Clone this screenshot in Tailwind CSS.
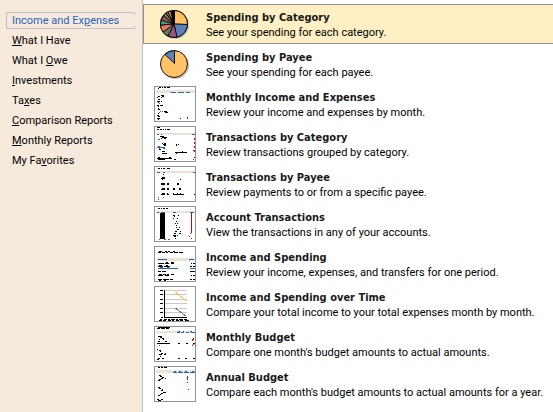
<!DOCTYPE html>
<html lang="en">
<head>
<meta charset="utf-8">
<meta name="viewport" content="width=device-width, initial-scale=1">
<title>Reports</title>
<script src="https://cdn.jsdelivr.net/npm/@tailwindcss/browser@4"></script>
</head>
<body class="flex min-h-screen bg-white font-['Tahoma','Roboto','DejaVu_Sans_Condensed',sans-serif] text-[11px] leading-[15px] text-black">
<nav aria-label="Report groups" class="w-[143px] shrink-0 border-r border-[#c2c2ca] bg-[#f6eadd] pt-[10px]">
  <ul class="leading-5 whitespace-nowrap">
    <li class="relative pl-[6px] pr-2">
      <a href="#income" aria-current="page" class="my-[2px] block h-[17px] border border-r-0 border-[#bfc0c8] pl-[5px] leading-[15px] text-[#2a62bc]">Income and Ex<u>p</u>enses</a>
      <span class="absolute top-0 right-[7px] h-[3px] w-px bg-[#bfc0c8]"></span>
      <span class="absolute bottom-0 right-[7px] h-[3px] w-px bg-[#bfc0c8]"></span>
    </li>
    <li><a href="#have" class="block pl-3"><u>W</u>hat I Have</a></li>
    <li><a href="#owe" class="block pl-3">What I <u>O</u>we</a></li>
    <li><a href="#investments" class="block pl-3"><u>I</u>nvestments</a></li>
    <li><a href="#taxes" class="block pl-3">Ta<u>x</u>es</a></li>
    <li><a href="#comparison" class="block pl-3"><u>C</u>omparison Reports</a></li>
    <li><a href="#monthly" class="block pl-3"><u>M</u>onthly Reports</a></li>
    <li><a href="#favorites" class="block pl-3">My Fa<u>v</u>orites</a></li>
  </ul>
</nav>
<main class="min-w-0 flex-1 border-t-[3px] border-white pt-px">
  <ul class="whitespace-nowrap [&_b]:block [&_b]:font-['Tahoma','DejaVu_Sans_Condensed',sans-serif] [&_b]:text-[#191919] [&_span]:pt-[2px]">
    <li>
      <a href="#r1" class="flex h-10 items-center gap-[10px] border border-r-0 border-[#929292] bg-[#fef0c4] pl-[10px]">
        <svg class="h-9 w-[42px] shrink-0" viewBox="0 0 42 36" aria-hidden="true">
          <circle cx="21.500" cy="19.500" r="13.500" fill="#cfc6b8"/>
          <circle cx="20" cy="18" r="14" fill="#111"/>
          <g stroke="#000" stroke-width=".8">
            <path d="M20.500 18V4.500A13.500 13.500 0 0 1 33.500 18.500Z" fill="#ffc266"/>
            <path d="M20 18L33.500 18.500A13.500 13.500 0 0 1 23 31.200Z" fill="#5b82b8"/>
            <path d="M20 18L23 31.200A13.500 13.500 0 0 1 14 30Z" fill="#93557f"/>
            <path d="M20 18L14 30A13.500 13.500 0 0 1 9 26Z" fill="#677b5c"/>
            <path d="M20 18L9 26A13.500 13.500 0 0 1 6.500 19Z" fill="#ed7760"/>
            <path d="M20 18L6.500 19A13.500 13.500 0 0 1 7.500 14Z" fill="#4b9988"/>
            <path d="M20 18L7.500 14A13.500 13.500 0 0 1 9.500 10Z" fill="#cb4e60"/>
            <path d="M20 18L9.500 10A13.500 13.500 0 0 1 12 7Z" fill="#4c886c"/>
            <path d="M20 18L12 7A13.500 13.500 0 0 1 14 5.800Z" fill="#d95e55"/>
            <path d="M20 18L14 5.800A13.500 13.500 0 0 1 16.500 5Z" fill="#e89b4e"/>
          </g>
          <path d="M18 4h3v14h-3z"/>
        </svg>
        <span><b>Spending by Category</b>See your spending for each category.</span>
      </a>
    </li>
    <li>
      <a href="#r2" class="flex h-10 items-center gap-[10px] pl-[11px]">
        <svg class="h-9 w-[42px] shrink-0" viewBox="0 0 42 36" aria-hidden="true">
          <circle cx="21.500" cy="19.500" r="13.500" fill="#cfc6b8"/>
          <circle cx="20" cy="18" r="13.500" fill="#ffc266" stroke="#111"/>
          <path d="M20.500 17.500V4.500A13.500 13.500 0 0 0 11 8.500Z" fill="#5b82b8" stroke="#111"/>
        </svg>
        <span><b>Spending by Payee</b>See your spending for each payee.</span>
      </a>
    </li>
    <li>
      <a href="#r3" class="flex h-10 items-center gap-[10px] pl-[11px]">
        <svg class="h-9 w-[42px] shrink-0" viewBox="0 0 42 36" fill="none" shape-rendering="crispEdges" aria-hidden="true">
          <path d="M2 4h39v3H2z" fill="#e9e2d7"/>
          <path stroke="#000" d="M5 1.500h2m1 0h1m1 0h2m1 0h3M4 2.500h1M7 9.500h3M4 10.500h2m2 0h2M3 11.500h1m3 0h1M4 13.500h2M3 15.500h3m1 0h1M4 16.500h1M3 19.500h2m1 0h3M4 20.500h1M4 22.500h1M4 23.500h2M10 25.500h3M11 26.500h3M4 27.500h1M3 29.500h2M4 30.500h2M3 32.500h3M4 33.500h1"/>
          <path stroke="#2866bd" d="M17 6.500h5m2 0h6m2 0h4M5 17.500h1M6 25.500h1m1 0h1M5 26.500h1"/>
          <path stroke="#d80000" d="M33 31.500h1M26 32.500h1m6 0h1"/>
          <path stroke="#929292" d="M.5.500h41v35H.5z"/>
        </svg>
        <span><b>Monthly Income and Expenses</b>Review your income and expenses by month.</span>
      </a>
    </li>
    <li>
      <a href="#r4" class="flex h-10 items-center gap-[10px] pl-[11px]">
        <svg class="h-9 w-[42px] shrink-0" viewBox="0 0 42 36" fill="none" shape-rendering="crispEdges" aria-hidden="true">
          <path d="M2 7h39v2H2z" fill="#e9e2d7"/>
          <path stroke="#000" d="M3 1.500h3M3 3.500h2m1 0h2m1 0h1m1 0h1m1 0h3M6 10.500h4M8 11.500h5M7 12.500h1m2 0h2M8 17.500h1m1 0h2M9 18.500h3m10 0h1m1 0h1M10 19.500h2m10 0h1M5 23.500h2M8 25.500h3m17 0h1M21 26.500h12M8 27.500h5m9 0h1M4 31.500h2m9 0h2M3 32.500h15M4 33.500h7m9 0h2"/>
          <path stroke="#2866bd" d="M3 8.500h2m2 0h1m30 0h3M4 13.500h2M4 20.500h2M3 21.500h8M5 22.500h1m3 0h2"/>
          <path stroke="#d80000" stroke-dasharray="2 2" d="M40.500 12v16"/>
          <path stroke="#d80000" d="M39 24.500h1M40 31.500h1M39 33.500h1"/>
          <path stroke="#929292" d="M.5.500h41v35H.5z"/>
        </svg>
        <span><b>Transactions by Category</b>Review transactions grouped by category.</span>
      </a>
    </li>
    <li>
      <a href="#r5" class="flex h-10 items-center gap-[10px] pl-[11px]">
        <svg class="h-9 w-[42px] shrink-0" viewBox="0 0 42 36" fill="none" shape-rendering="crispEdges" aria-hidden="true">
          <path d="M2 5h39v2H2z" fill="#e9e2d7"/>
          <path stroke="#000" d="M4 2.500h2m1 0h1m1 0h2m2 0h3M9 8.500h1M8 11.500h3M7 12.500h4M8 13.500h1M7 17.500h4m2 0h2m8 0h2M7 18.500h4m2 0h2m8 0h2M26 13.500h1M8 22.500h3m2 0h2m4 0h2m4 0h2M7 23.500h4m2 0h2m4 0h2m4 0h2M19 27.500h1m3 0h1m2 0h1M8 27.500h3m2 0h1M7 28.500h4m2 0h2m4 0h11m10 0h1"/>
          <path stroke="#2866bd" d="M3 6.500h3m3 0h2m28 0h2M9 31.500h1M4 31.500h1M4 33.500h1"/>
          <path stroke="#929292" d="M.5.500h41v35H.5z"/>
        </svg>
        <span><b>Transactions by Payee</b>Review payments to or from a specific payee.</span>
      </a>
    </li>
    <li>
      <a href="#r6" class="flex h-10 items-center gap-[10px] pl-[11px]">
        <svg class="h-9 w-[42px] shrink-0" viewBox="0 0 42 36" fill="none" shape-rendering="crispEdges" aria-hidden="true">
          <path d="M2 5h39v2H2z" fill="#e9e2d7"/>
          <path d="M6 7h5v26H6z" fill="#000"/>
          <path stroke="#000" d="M4 2.500h2m1 0h1m1 0h2m1 0h2M19 9.500h2m3 0h1M20 10.500h1M23 12.500h1M19 12.500h1M22 15.500h1M21 17.500h1m1 0h1M22 19.500h1M22 21.500h1m2 0h1M23 23.500h2M21 25.500h2m3 0h1M20 27.500h2m3 0h2M19 29.500h3m1 0h1M20 30.500h2M21 32.500h1"/>
          <path stroke="#2866bd" d="M3 6.500h2m2 0h4m8 0h3m14 0h4M5 33.500h1m4 0h2m2 0h2"/>
          <path stroke="#d80000" d="M37.500 7v20M36 27.500h1M35 30.500h1M37 32.500h1"/>
          <path stroke="#929292" d="M.5.500h41v35H.5z"/>
        </svg>
        <span><b>Account Transactions</b>View the transactions in any of your accounts.</span>
      </a>
    </li>
    <li>
      <a href="#r7" class="flex h-10 items-center gap-[10px] pl-[11px]">
        <svg class="h-9 w-[42px] shrink-0" viewBox="0 0 42 36" fill="none" shape-rendering="crispEdges" aria-hidden="true">
          <path d="M3 12h38v3H3z" fill="#e9e2d7"/>
          <path stroke="#000" d="M5 5.500h3m3 0h2m1 0h2m3 0h2M4 6.500h3m1 0h3m1 0h2m2 0h3m1 0h4m1 0h4M4 17.500h6m1 0h4m2 0h3m17 0h1m1 0h2M12 16.500h2m3 0h3M4 20.500h5m1 0h6m20 0h2m1 0h2M5 19.500h3m4 0h2M4 25.500h3m1 0h4M36 25.500h5M5 28.500h3m1 0h3m1 0h2m2 0h3M4 29.500h5m2 0h4m22 0h1m1 0h2M4 33.500h4m1 0h6m1 0h3m17 0h2m1 0h2M5 34.500h2m3 0h2"/>
          <path stroke="#2866bd" d="M4 13.500h9m22 0h5M4 22.500h20m12 0h5M6 21.500h3m4 0h2"/>
          <path stroke="#929292" d="M.5.500h41v35H.5z"/>
        </svg>
        <span><b>Income and Spending</b>Review your income, expenses, and transfers for one period.</span>
      </a>
    </li>
    <li>
      <a href="#r8" class="flex h-10 items-center gap-[10px] pl-[11px]">
        <svg class="h-9 w-[42px] shrink-0" viewBox="0 0 42 36" fill="none" shape-rendering="crispEdges" aria-hidden="true">
          <path stroke="#c9c9c9" d="M11 4.500h22M11 8.500h22M11 13.500h22M11 17.500h22M11 22.500h22M11 26.500h22"/>
          <path stroke="#000" d="M10.500 4v28M10 31.500h23M6 4.500h3M6 8.500h3M6 13.500h3M6 17.500h3M6 22.500h3M6 26.500h3M7 31.500h2M6 33.500h2m2 0h3m1 0h2m1 0h4m1 0h2m1 0h4m1 0h3M5 34.500h3m1 0h3m2 0h3m1 0h2m2 0h3m1 0h3m2 0h4"/>
          <path stroke="#ffbd55" d="M21 6l12 9"/>
          <path stroke="#527dba" d="M21 22l11 8"/>
          <path stroke="#929292" d="M.5.500h41v35H.5z"/>
        </svg>
        <span><b>Income and Spending over Time</b>Compare your total income to your total expenses month by month.</span>
      </a>
    </li>
    <li>
      <a href="#r9" class="flex h-10 items-center gap-[10px] pl-[11px]">
        <svg class="h-9 w-[42px] shrink-0" viewBox="0 0 42 36" fill="none" shape-rendering="crispEdges" aria-hidden="true">
          <path d="M2 5h39v2H2z" fill="#e9e2d7"/>
          <path stroke="#000" d="M4 1.500h12M3 2.500h3m1 0h4m1 0h3M4 10.500h4M6 11.500h2M8 12.500h2M9 13.500h1M5 13.500h1M4 15.500h2m5 0h2M3 17.500h13m8 0h2m6 0h2m5 0h2M3 23.500h1M5 24.500h2M6 25.500h1M7 27.500h2m2 0h1M5 28.500h3m2 0h2M6 30.500h1M4 32.500h2m2 0h2m14 0h2m5 0h2m6 0h2M3 33.500h2"/>
          <path stroke="#2866bd" d="M23 6.500h3m1 0h3m2 0h3m2 0h4M24 5.500h2m3 0h1m6 0h2M5 19.500h1"/>
          <path stroke="#d80000" d="M39 12.500h1M38 13.500h2M38 14.500h1M39 18.500h1M38 19.500h1"/>
          <path stroke="#929292" d="M.5.500h41v35H.5z"/>
        </svg>
        <span><b>Monthly Budget</b>Compare one month's budget amounts to actual amounts.</span>
      </a>
    </li>
    <li>
      <a href="#r10" class="flex h-10 items-center gap-[10px] pl-[11px]">
        <svg class="h-9 w-[42px] shrink-0" viewBox="0 0 42 36" fill="none" shape-rendering="crispEdges" aria-hidden="true">
          <path d="M2 4h39v3H2z" fill="#e9e2d7"/>
          <path stroke="#000" d="M4 1.500h2m1 0h2m1 0h3M5 9.500h2M6 10.500h2M8 11.500h2M7 12.500h2m2 0h1M5 13.500h2M4 14.500h2M4 21.500h2M5 22.500h2M8 23.500h1M7 24.500h2M9 26.500h3M7 27.500h2M6 28.500h1M4 29.500h2M3 33.500h2m2 0h2M4 34.500h3"/>
          <path stroke="#2866bd" d="M19 6.500h4m1 0h5m1 0h5m1 0h5M20 5.500h2m3 0h2m4 0h2m5 0h2"/>
          <path stroke="#d80000" d="M33.500 10v4M33 16.500h1M34 23.500h1"/>
          <path stroke="#929292" d="M.5.500h41v35H.5z"/>
        </svg>
        <span><b>Annual Budget</b>Compare each month's budget amounts to actual amounts for a year.</span>
      </a>
    </li>
  </ul>
</main>
</body>
</html>
